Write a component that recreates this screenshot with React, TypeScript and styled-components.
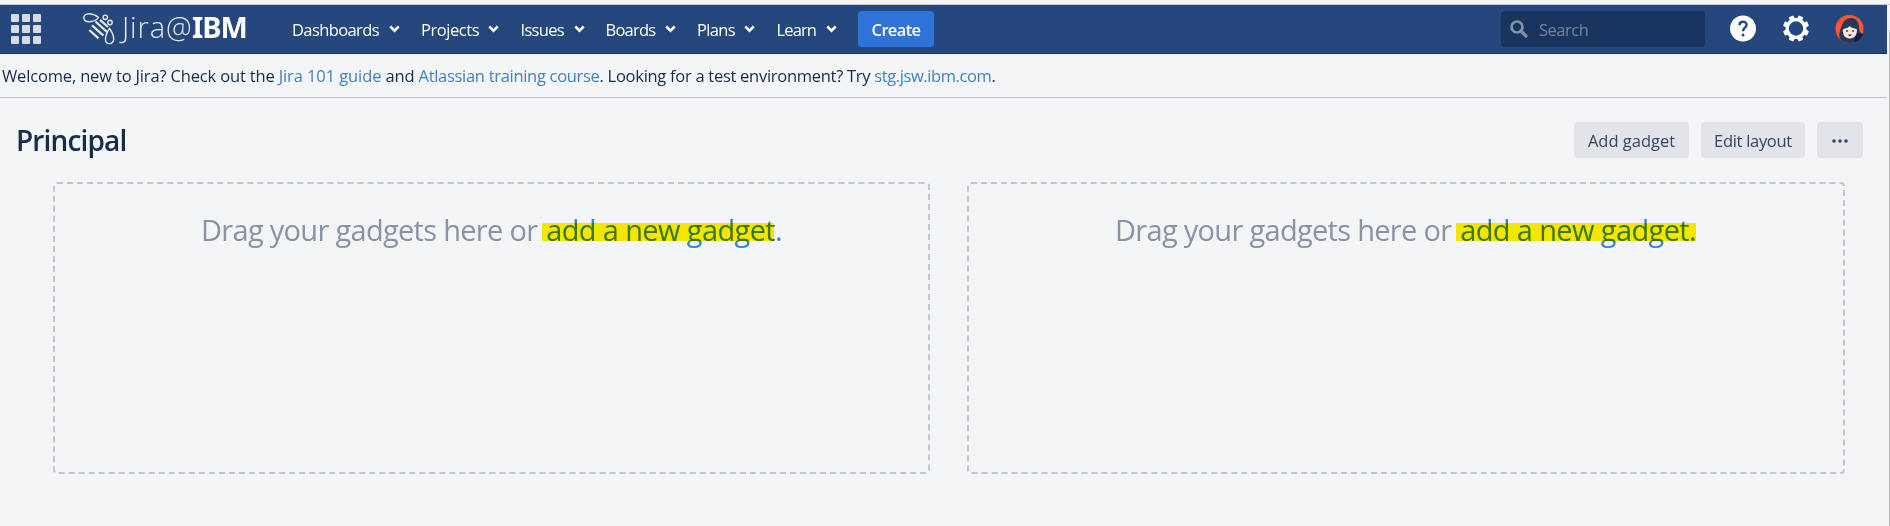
import React from 'react';
import styled, { createGlobalStyle } from 'styled-components';

const Global = createGlobalStyle`
  * { box-sizing: border-box; }
  body {
    margin: 0;
    background: #f4f5f7;
    font-family: 'Open Sans', 'Noto Sans', sans-serif;
    font-size: 16.5px;
    color: #172b4d;
    overflow: hidden;
  }
`;

const Page = styled.div`
  display: flex;
  height: 526px;
`;

const Content = styled.div`
  width: 1887px;
  display: flex;
  flex-direction: column;
`;

const WindowEdge = styled.div`
  flex: 1;
  margin-top: 30px;
  border-right: 1px solid #bdbdbd;
`;

const TopStrip = styled.div`
  height: 5px;
  width: 1890px;
  background: #f5f5f5;
  border-bottom: 1px solid #c9c9c9;
`;

const Header = styled.header`
  display: flex;
  height: 49px;
  background: #26477b;
  border-bottom: 1px solid #22395f;
`;

const AppSwitcher = styled.div`
  display: grid;
  grid-template-columns: repeat(3, 8px);
  grid-auto-rows: 8px;
  gap: 3px;
  width: 72px;
  padding: 9px 0 0 11px;
`;

const Tile = styled.span`
  border-radius: 1px;
  background: #d6dce6;
`;

const Logo = styled.div`
  display: flex;
  width: 220px;
  padding-left: 11px;
  line-height: 44px;
  font-size: 29px;
  color: #e3e8ef;
  white-space: nowrap;
`;

const LogoLight = styled.span`
  width: 70px;
  margin-left: 6px;
  font-weight: 300;
  letter-spacing: 0.9px;
`;

const LogoBold = styled.span`
  font-family: 'Noto Sans', sans-serif;
  font-weight: 700;
  letter-spacing: -1px;
  color: #fff;
`;

const NavItem = styled.a<{ $width: number; $caret: number; $track: number }>`
  display: flex;
  width: ${(p) => p.$width}px;
  line-height: 49px;
  color: #fff;
  letter-spacing: ${(p) => p.$track}px;
  white-space: nowrap;

  span { width: ${(p) => p.$caret}px; }
  svg { margin-top: 20px; }
`;

const CreateButton = styled.button`
  width: 76px;
  height: 36px;
  margin: 6px 0 0;
  padding: 0;
  border: 0;
  border-radius: 4px;
  background: #2d73da;
  color: #fff;
  font: 600 16.5px/37px 'Open Sans', sans-serif;
  letter-spacing: -0.65px;
`;

const SearchBox = styled.div`
  display: flex;
  width: 204px;
  height: 36px;
  margin: 6px 0 0 auto;
  padding: 9px 0 0 9px;
  border-radius: 4px;
  background: #19345f;
  color: #75849c;
  letter-spacing: -0.5px;
  line-height: 20px;

  svg { margin-right: 11px; }
`;

const HeaderIcons = styled.div`
  display: flex;
  gap: 27px;
  width: 182px;
  padding: 9px 0 0 25px;

  svg:last-child { margin-left: -1px; }
`;

const Announcement = styled.div`
  height: 44px;
  padding-left: 2px;
  border-bottom: 1px solid #c1c7d0;
  line-height: 44px;
  white-space: nowrap;
`;

const Phrase = styled.span<{ $track: number }>`
  letter-spacing: ${(p) => p.$track}px;
`;

const Link = styled(Phrase).attrs({ as: 'a' })`
  color: #4480c6;
`;

const TitleBar = styled.div`
  display: flex;
  gap: 12px;
  height: 84px;
  padding: 24px 24px 0 16px;
`;

const Title = styled.h1`
  margin: -1px auto 0 0;
  font-size: 28px;
  font-weight: 600;
  line-height: 38px;
  letter-spacing: -0.85px;
`;

const ToolButton = styled.button<{ $width: number; $track?: number }>`
  display: flex;
  align-items: center;
  justify-content: center;
  width: ${(p) => p.$width}px;
  height: 36px;
  padding: 1px 0 0;
  border: 0;
  border-radius: 4px;
  background: #e2e4e9;
  color: #344563;
  font: 16.5px 'Open Sans', sans-serif;
  letter-spacing: ${(p) => p.$track ?? 0}px;
`;

const Columns = styled.main`
  display: grid;
  grid-template-columns: 877px 878px;
  gap: 37px;
  padding-left: 53px;
`;

const DropZone = styled.section`
  height: 292px;
  padding-top: 26px;
  border: 2px dashed #c1c7d0;
  border-radius: 4px;
  font-size: 29px;
  line-height: 40px;
  letter-spacing: -0.7px;
  color: #8993a4;
  white-space: nowrap;
`;

const DropText = styled.p`
  margin: 0 0 0 146px;
`;

const GadgetLink = styled.a`
  position: relative;
  margin-left: 2px;
  color: #3b7fc4;
  letter-spacing: -0.62px;
`;

const Marker = styled.span<{ $width: number }>`
  position: absolute;
  left: -4px;
  top: 13px;
  width: ${(p) => p.$width}px;
  height: 18px;
  background: #fff000;
  mix-blend-mode: multiply;
`;

const menus = [
  { label: 'Dashboards', width: 129, caret: 97, track: -0.6 },
  { label: 'Projects', width: 99.5, caret: 67, track: -0.44 },
  { label: 'Issues', width: 85, caret: 53, track: -0.7 },
  { label: 'Boards', width: 91.5, caret: 59, track: -0.78 },
  { label: 'Plans', width: 79.5, caret: 47, track: -0.67 },
  { label: 'Learn', width: 81.5, caret: 49.5, track: -0.87 },
];

const Caret = () => (
  <svg width="11" height="8" viewBox="0 0 11 8">
    <path d="M1.3 1.5 5.5 5.6 9.7 1.5" fill="none" stroke="#fff" strokeWidth="2.6" />
  </svg>
);

const Bee = () => (
  <svg width="33" height="41" viewBox="0 0 33 41" fill="none" stroke="#e3e8ef" strokeWidth="1.4">
    <path d="M15.500 12.500C13 16.500 3 18.500 1.200 14.500-.3 10.500 3 8.500 6.500 8.700c3 .2 7 2 9 3.800Z" />
    <path d="M26.500 23.500c-3 4-5.500 11-3 14 2.500 2.300 7 .8 7.200-3 .1-3-2-8-4.200-11Z" />
    <circle cx="22.300" cy="12.300" r="2.200" />
    <circle cx="27" cy="17.500" r="2.200" />
    <path d="M17 14.800 25 22M12.500 16.500 24 27M9 20.300 20.500 30.700M6.300 25 15.500 33.300" strokeWidth="2.300" />
  </svg>
);

const SearchIcon = () => (
  <svg width="18" height="18" viewBox="0 0 18 18" fill="none" stroke="#8491a6">
    <circle cx="7" cy="7" r="5.500" strokeWidth="2.700" />
    <path d="m11 11 5 5" strokeWidth="3.200" strokeLinecap="round" />
  </svg>
);

const HelpIcon = () => (
  <svg width="26" height="28" viewBox="0 0 26 28">
    <circle cx="13" cy="14.500" r="13" fill="#fff" />
    <path d="M9.400 11.200c.2-4.700 7.500-4.400 7.200-.2-.2 2.600-3.600 2.800-3.600 6.200" fill="none" stroke="#26477b" strokeWidth="2.400" />
    <circle cx="13" cy="21" r="1.500" fill="#26477b" />
  </svg>
);

const GearIcon = () => (
  <svg width="26" height="28" viewBox="0 0 26 28">
    <g transform="translate(13 14.500)" fill="#fff">
      {[0, 45, 90, 135].map((a) => (
        <path key={a} transform={`rotate(${a + 22.5})`} d="M-3-9-2.300-13H2.300L3-9V9L2.300 13H-2.300L-3 9Z" />
      ))}
      <circle r="10.500" />
      <circle r="7.200" fill="#26477b" />
    </g>
  </svg>
);

const Avatar = () => (
  <svg width="29" height="29" viewBox="0 0 29 29">
    <circle cx="14.500" cy="15" r="14" fill="#ff5630" />
    <path d="M5 25C3 20 6 14 7 11 8 7 12 4 16 4c5 0 8 4 8 9 0 4 2 7 4 7-2 5-8 9-13.500 9-4 0-7-1.500-9.500-4Z" fill="#253858" />
    <path d="M22 19 28 20c-1 4-5 7.500-9.500 8.500Z" fill="#0b1f40" />
    <path d="M7.800 15.500c1-1 5-1 7-3.500 1.500 2 4 2.500 7 3 .7 5.500-2.300 9.500-7 9.500s-7.500-4-7-9Z" fill="#ffe3dc" />
    <circle cx="12" cy="17" r="0.900" fill="#253858" />
    <circle cx="18" cy="17" r="0.900" fill="#253858" />
    <path d="M13 20.500h4l-1 1.500h-2Z" fill="#253858" />
  </svg>
);

const Dots = () => (
  <svg width="16" height="4" viewBox="0 0 16 4" fill="#344563">
    <circle cx="2" cy="2" r="1.800" />
    <circle cx="8" cy="2" r="1.800" />
    <circle cx="14" cy="2" r="1.800" />
  </svg>
);

const Zone = ({ marker }: { marker: number }) => (
  <DropZone>
    <DropText>
      Drag your gadgets here or{' '}
      <GadgetLink>
        add a new gadget.
        <Marker $width={marker} />
      </GadgetLink>
    </DropText>
  </DropZone>
);

export default function App() {
  return (
    <>
      <Global />
      <Page>
        <Content>
          <TopStrip />
          <Header>
            <AppSwitcher>
              {Array.from({ length: 9 }, (_, i) => <Tile key={i} />)}
            </AppSwitcher>
            <Logo>
              <Bee />
              <LogoLight>Jira@</LogoLight>
              <LogoBold>IBM</LogoBold>
            </Logo>
            {menus.map((m) => (
              <NavItem key={m.label} $width={m.width} $caret={m.caret} $track={m.track}>
                <span>{m.label}</span>
                <Caret />
              </NavItem>
            ))}
            <CreateButton>Create</CreateButton>
            <SearchBox>
              <SearchIcon />
              Search
            </SearchBox>
            <HeaderIcons>
              <HelpIcon />
              <GearIcon />
              <Avatar />
            </HeaderIcons>
          </Header>
          <Announcement>
            <Phrase $track={-0.16}>Welcome, new to Jira? Check out the </Phrase>
            <Link $track={-0.1}>Jira 101 guide</Link>
            <Phrase $track={-0.15}> and </Phrase>
            <Link $track={-0.3}>Atlassian training course</Link>
            <Phrase $track={-0.28}>. Looking for a test environment? Try </Phrase>
            <Link $track={-0.4}>stg.jsw.ibm.com</Link>.
          </Announcement>
          <TitleBar>
            <Title>Principal</Title>
            <ToolButton $width={115}>Add gadget</ToolButton>
            <ToolButton $width={104} $track={-0.3}>Edit layout</ToolButton>
            <ToolButton $width={46}><Dots /></ToolButton>
          </TitleBar>
          <Columns>
            <Zone marker={232} />
            <Zone marker={240} />
          </Columns>
        </Content>
        <WindowEdge />
      </Page>
    </>
  );
}
